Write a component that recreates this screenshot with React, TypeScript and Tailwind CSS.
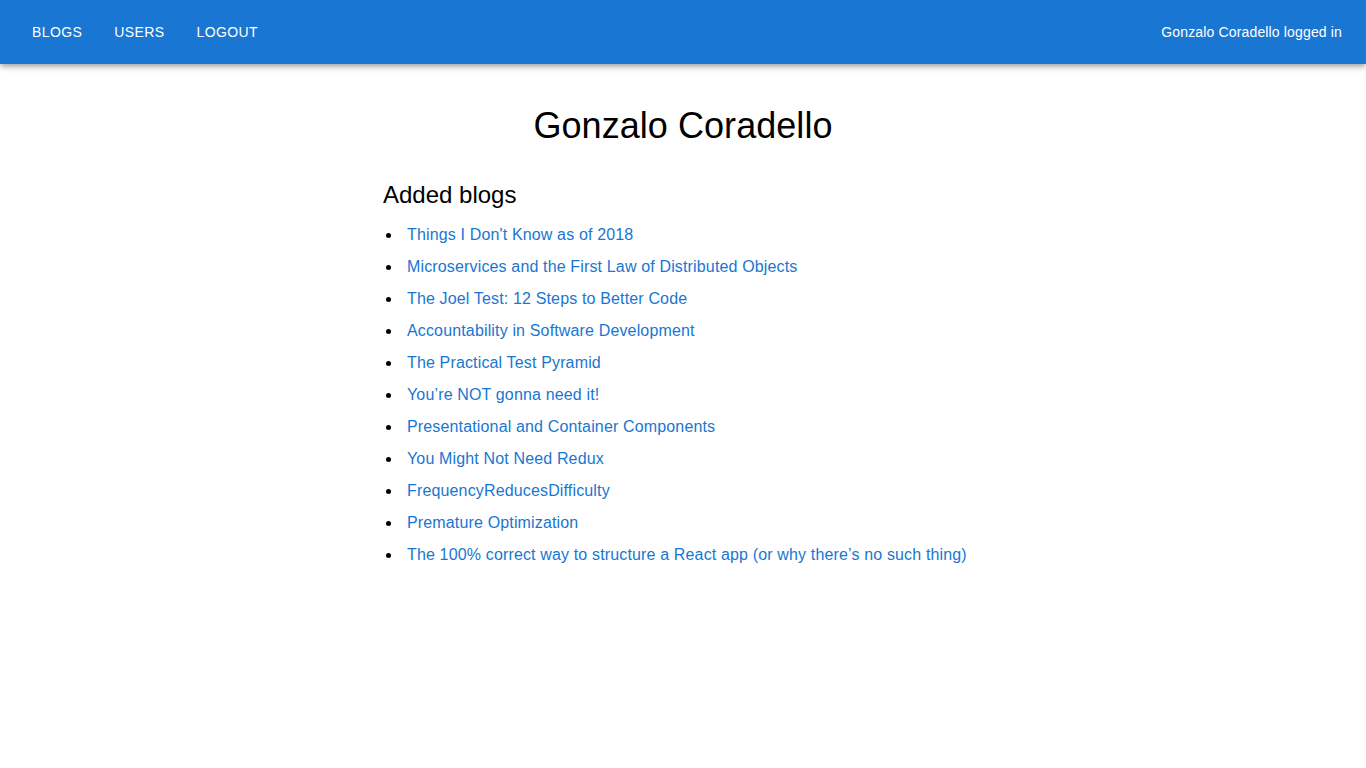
const blogs = [
  "Things I Don't Know as of 2018",
  "Microservices and the First Law of Distributed Objects",
  "The Joel Test: 12 Steps to Better Code",
  "Accountability in Software Development",
  "The Practical Test Pyramid",
  "You’re NOT gonna need it!",
  "Presentational and Container Components",
  "You Might Not Need Redux",
  "FrequencyReducesDifficulty",
  "Premature Optimization",
  "The 100% correct way to structure a React app (or why there’s no such thing)",
];

export default function App() {
  return (
    <div className="min-h-screen bg-white font-['Liberation_Sans',Arial,sans-serif] text-black">
      {/* App bar */}
      <header className="h-16 bg-[#1976d2] text-white flex items-center justify-between px-6 shadow-[0_2px_4px_-1px_rgba(0,0,0,0.2),0_4px_5px_0_rgba(0,0,0,0.14),0_1px_10px_0_rgba(0,0,0,0.12)]">
        <nav className="flex items-center gap-4">
          {["BLOGS", "USERS", "LOGOUT"].map((label) => (
            <a key={label} href="#" className="px-2 py-1.5 text-sm tracking-[0.4px] leading-6">
              {label}
            </a>
          ))}
        </nav>
        <span className="text-sm tracking-[0.15px]">Gonzalo Coradello logged in</span>
      </header>

      {/* User view */}
      <main className="max-w-[600px] mx-auto pt-[40px]">
        <h2 className="text-center text-[36px] leading-[44px] tracking-[0.05px]">Gonzalo Coradello</h2>
        <h3 className="mt-[33px] text-[24px] leading-7">Added blogs</h3>
        <ul className="mt-[10px]">
          {blogs.map((title) => (
            <li key={title} className="flex items-center gap-4 leading-6 py-1">
              <span className="ml-[3px] w-[5px] h-[5px] rounded-full bg-black shrink-0" />
              <a href="#" className="text-[#1976d2] tracking-[0.15px]">
                {title}
              </a>
            </li>
          ))}
        </ul>
      </main>
    </div>
  );
}
